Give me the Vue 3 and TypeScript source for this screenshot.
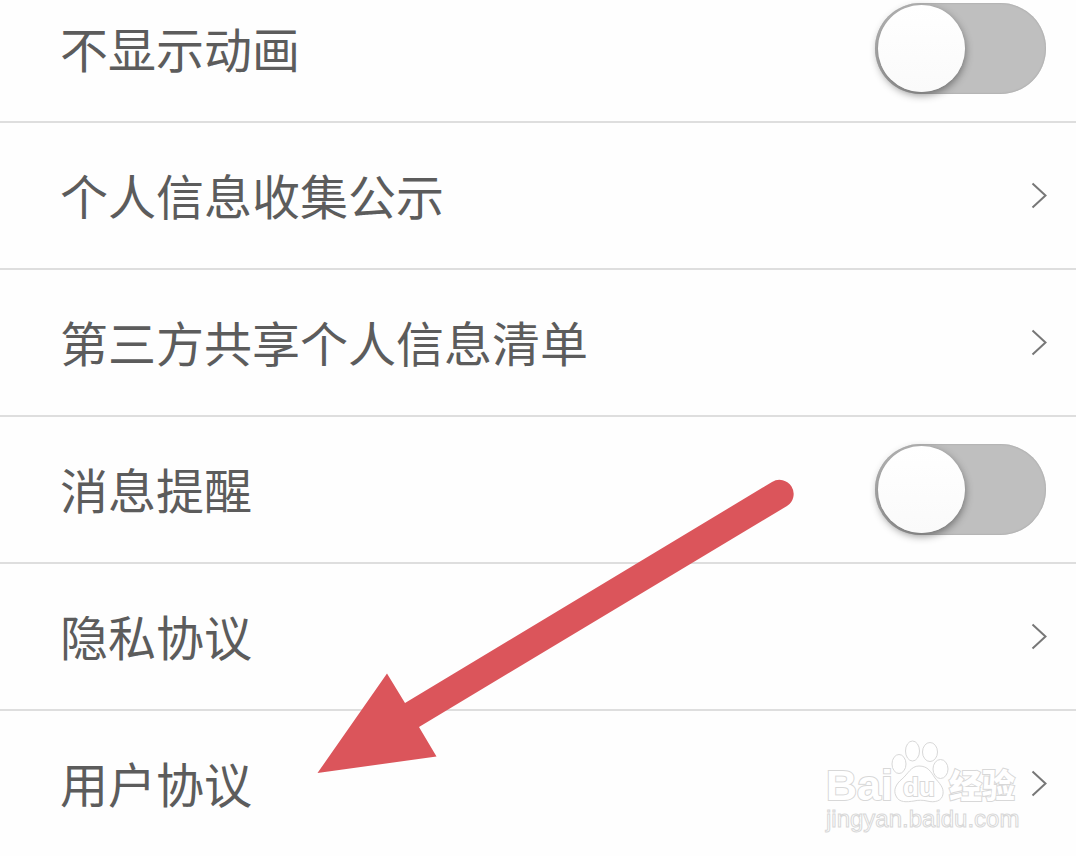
<script setup lang="ts">
import { ref } from 'vue'

interface SettingRow {
  id: string
  label: string
  kind: 'toggle' | 'link'
}

const rows: SettingRow[] = [
  { id: 'no-animation', label: '不显示动画', kind: 'toggle' },
  { id: 'collection', label: '个人信息收集公示', kind: 'link' },
  { id: 'third-party', label: '第三方共享个人信息清单', kind: 'link' },
  { id: 'reminder', label: '消息提醒', kind: 'toggle' },
  { id: 'privacy', label: '隐私协议', kind: 'link' },
  { id: 'agreement', label: '用户协议', kind: 'link' },
]

const enabled = ref<Record<string, boolean>>({
  'no-animation': false,
  reminder: false,
})
</script>

<template>
  <main class="page">
    <ul class="list">
      <li v-for="row in rows" :key="row.id" class="item">
        <div v-if="row.kind === 'toggle'" class="row">
          <label class="label" :for="row.id">{{ row.label }}</label>
          <input :id="row.id" v-model="enabled[row.id]" class="switch" type="checkbox" role="switch" />
        </div>
        <a v-else class="row" :href="'#' + row.id">
          <span class="label">{{ row.label }}</span>
          <svg class="chevron" viewBox="0 0 14 26" aria-hidden="true">
            <path d="M0.5 0.5 L13.5 12.5 L0.5 24.5" />
          </svg>
        </a>
      </li>
    </ul>

    <svg class="pointer" viewBox="0 0 478 296" aria-hidden="true">
      <path d="M-0.5 295 L69 195.5 L87 225 L454 4 A14 14 0 0 1 469 28 L101 249 L118.5 278.5 Z" />
    </svg>

    <svg class="watermark" viewBox="0 0 200 100" aria-hidden="true">
      <text class="bai" x="2" y="64">Bai</text>
      <ellipse cx="75" cy="28" rx="7" ry="9.5" />
      <ellipse cx="88.5" cy="15" rx="7" ry="10" />
      <ellipse cx="106" cy="16" rx="7.5" ry="9.5" />
      <ellipse cx="116.5" cy="33" rx="7.5" ry="9.5" />
      <path d="M95 30 C87 30 84 38 78 43 C72 48 69 54 72 60 C75 67 83 66 90 65 C94 64 99 64 103 65 C111 67 118 65 119 58 C120 51 115 47 111 42 C107 36 104 30 95 30 Z" />
      <text class="du" x="79" y="60">du</text>
      <text class="exp" x="125" y="62">经验</text>
      <text class="site" x="2" y="91">jingyan.baidu.com</text>
    </svg>
  </main>
</template>

<style>
body {
  margin: 0;
  background: #fefefe;
}
</style>

<style scoped>
.page {
  position: relative;
  overflow: hidden;
  font-family: "Noto Sans CJK SC", "Liberation Sans", sans-serif;
  color: #5c5c5c;
}

/* The list is scrolled slightly past the top of its first row. */
.list {
  margin: -24px 0 0;
  padding: 0;
  list-style: none;
}

.item {
  border-bottom: 2px solid #dedede;
}

.item:last-child {
  border-bottom: 0;
}

.row {
  display: flex;
  align-items: center;
  justify-content: space-between;
  height: 145px;
  padding: 0 30px 0 60px;
  color: inherit;
  text-decoration: none;
}

.label {
  padding-bottom: 4px;
  font-size: 48px;
  line-height: 72px;
}

.switch {
  appearance: none;
  box-sizing: border-box;
  flex: none;
  width: 171px;
  height: 91px;
  margin: 0;
  padding: 2px 3px;
  border-radius: 46px;
  background: #bfbfbf;
  box-shadow: inset 0 0 2px #999;
}

.switch::before {
  content: "";
  display: block;
  width: 87px;
  height: 87px;
  border-radius: 50%;
  background: linear-gradient(#fff, #fafafa);
  box-shadow: 0 3px 8px rgba(0, 0, 0, 0.45);
}

.switch:checked::before {
  margin-left: auto;
}

.chevron {
  flex: none;
  width: 14px;
  height: 26px;
  overflow: visible;
  fill: none;
  stroke: #777;
  stroke-width: 2;
}

.pointer {
  position: absolute;
  left: 318px;
  top: 478px;
  width: 478px;
  height: 296px;
  overflow: visible;
  fill: #db555b;
  pointer-events: none;
}

.watermark {
  position: absolute;
  right: 52px;
  bottom: 20px;
  width: 200px;
  height: 100px;
  overflow: visible;
  fill: #fff;
  stroke: #d8d8d8;
  stroke-width: 1;
  pointer-events: none;
  font-family: "Liberation Sans", "Noto Sans CJK SC", sans-serif;
}

.bai,
.du,
.exp {
  stroke-width: 2;
  paint-order: stroke;
}

.bai {
  font-size: 43px;
  font-weight: 700;
}

.du {
  font-size: 26px;
  font-weight: 700;
}

.exp {
  font-family: "Noto Sans CJK SC", sans-serif;
  font-size: 33px;
  font-weight: 900;
}

.site {
  font-size: 24px;
}
</style>
